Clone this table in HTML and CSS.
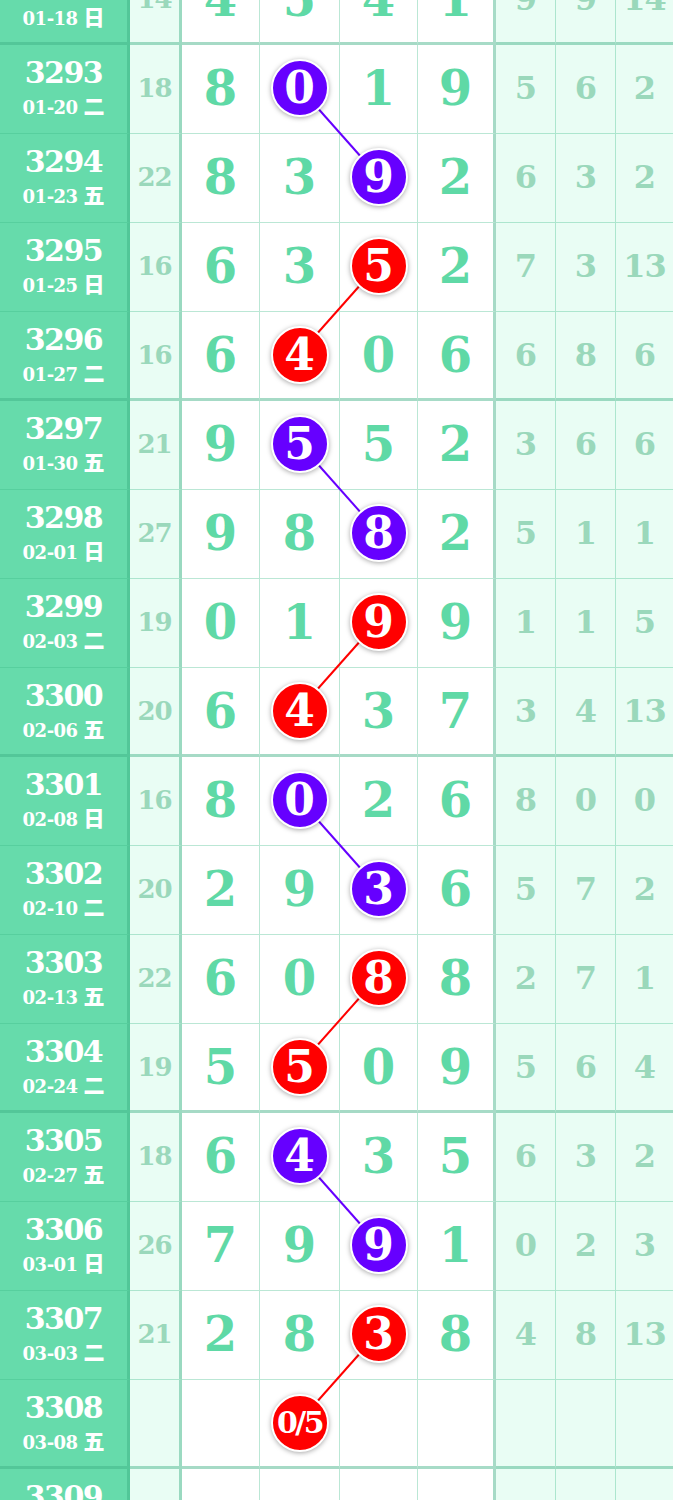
FILE: index.html
```html
<!DOCTYPE html>
<html lang="zh">
<head>
    <meta charset="UTF-8">
    <meta name="viewport" content="width=device-width, initial-scale=1.0">
    <title>走势图</title>
    <link rel="stylesheet" href="styles.css">
</head>
<body>

    <div class="chart">
        <!-- lines between the balls, under them -->
        <svg class="links" width="673" height="1602" viewBox="0 0 673 1602">
            <line x1="299" y1="131" x2="378" y2="220" class="purple"/>
            <line x1="378" y1="309" x2="299" y2="398" class="red"/>
            <line x1="299" y1="487" x2="378" y2="576" class="purple"/>
            <line x1="378" y1="665" x2="299" y2="754" class="red"/>
            <line x1="299" y1="843" x2="378" y2="932" class="purple"/>
            <line x1="378" y1="1021" x2="299" y2="1110" class="red"/>
            <line x1="299" y1="1199" x2="378" y2="1288" class="purple"/>
            <line x1="378" y1="1377" x2="299" y2="1466" class="red"/>
        </svg>

        <div class="row end">
            <div class="cell issue"><b>3292</b><span>01-18 <em>日</em></span></div>
            <div class="cell sum">14</div>
            <div class="cell num">4</div>
            <div class="cell num">5</div>
            <div class="cell num">4</div>
            <div class="cell num">1</div>
            <div class="cell stat">9</div>
            <div class="cell stat">9</div>
            <div class="cell stat">14</div>
        </div>

        <div class="row">
            <div class="cell issue"><b>3293</b><span>01-20 <em>二</em></span></div>
            <div class="cell sum">18</div>
            <div class="cell num">8</div>
            <div class="cell num"><i class="ball purple">0</i></div>
            <div class="cell num">1</div>
            <div class="cell num">9</div>
            <div class="cell stat">5</div>
            <div class="cell stat">6</div>
            <div class="cell stat">2</div>
        </div>
        <div class="row">
            <div class="cell issue"><b>3294</b><span>01-23 <em>五</em></span></div>
            <div class="cell sum">22</div>
            <div class="cell num">8</div>
            <div class="cell num">3</div>
            <div class="cell num"><i class="ball purple">9</i></div>
            <div class="cell num">2</div>
            <div class="cell stat">6</div>
            <div class="cell stat">3</div>
            <div class="cell stat">2</div>
        </div>
        <div class="row">
            <div class="cell issue"><b>3295</b><span>01-25 <em>日</em></span></div>
            <div class="cell sum">16</div>
            <div class="cell num">6</div>
            <div class="cell num">3</div>
            <div class="cell num"><i class="ball red">5</i></div>
            <div class="cell num">2</div>
            <div class="cell stat">7</div>
            <div class="cell stat">3</div>
            <div class="cell stat">13</div>
        </div>
        <div class="row end">
            <div class="cell issue"><b>3296</b><span>01-27 <em>二</em></span></div>
            <div class="cell sum">16</div>
            <div class="cell num">6</div>
            <div class="cell num"><i class="ball red">4</i></div>
            <div class="cell num">0</div>
            <div class="cell num">6</div>
            <div class="cell stat">6</div>
            <div class="cell stat">8</div>
            <div class="cell stat">6</div>
        </div>

        <div class="row">
            <div class="cell issue"><b>3297</b><span>01-30 <em>五</em></span></div>
            <div class="cell sum">21</div>
            <div class="cell num">9</div>
            <div class="cell num"><i class="ball purple">5</i></div>
            <div class="cell num">5</div>
            <div class="cell num">2</div>
            <div class="cell stat">3</div>
            <div class="cell stat">6</div>
            <div class="cell stat">6</div>
        </div>
        <div class="row">
            <div class="cell issue"><b>3298</b><span>02-01 <em>日</em></span></div>
            <div class="cell sum">27</div>
            <div class="cell num">9</div>
            <div class="cell num">8</div>
            <div class="cell num"><i class="ball purple">8</i></div>
            <div class="cell num">2</div>
            <div class="cell stat">5</div>
            <div class="cell stat">1</div>
            <div class="cell stat">1</div>
        </div>
        <div class="row">
            <div class="cell issue"><b>3299</b><span>02-03 <em>二</em></span></div>
            <div class="cell sum">19</div>
            <div class="cell num">0</div>
            <div class="cell num">1</div>
            <div class="cell num"><i class="ball red">9</i></div>
            <div class="cell num">9</div>
            <div class="cell stat">1</div>
            <div class="cell stat">1</div>
            <div class="cell stat">5</div>
        </div>
        <div class="row end">
            <div class="cell issue"><b>3300</b><span>02-06 <em>五</em></span></div>
            <div class="cell sum">20</div>
            <div class="cell num">6</div>
            <div class="cell num"><i class="ball red">4</i></div>
            <div class="cell num">3</div>
            <div class="cell num">7</div>
            <div class="cell stat">3</div>
            <div class="cell stat">4</div>
            <div class="cell stat">13</div>
        </div>

        <div class="row">
            <div class="cell issue"><b>3301</b><span>02-08 <em>日</em></span></div>
            <div class="cell sum">16</div>
            <div class="cell num">8</div>
            <div class="cell num"><i class="ball purple">0</i></div>
            <div class="cell num">2</div>
            <div class="cell num">6</div>
            <div class="cell stat">8</div>
            <div class="cell stat">0</div>
            <div class="cell stat">0</div>
        </div>
        <div class="row">
            <div class="cell issue"><b>3302</b><span>02-10 <em>二</em></span></div>
            <div class="cell sum">20</div>
            <div class="cell num">2</div>
            <div class="cell num">9</div>
            <div class="cell num"><i class="ball purple">3</i></div>
            <div class="cell num">6</div>
            <div class="cell stat">5</div>
            <div class="cell stat">7</div>
            <div class="cell stat">2</div>
        </div>
        <div class="row">
            <div class="cell issue"><b>3303</b><span>02-13 <em>五</em></span></div>
            <div class="cell sum">22</div>
            <div class="cell num">6</div>
            <div class="cell num">0</div>
            <div class="cell num"><i class="ball red">8</i></div>
            <div class="cell num">8</div>
            <div class="cell stat">2</div>
            <div class="cell stat">7</div>
            <div class="cell stat">1</div>
        </div>
        <div class="row end">
            <div class="cell issue"><b>3304</b><span>02-24 <em>二</em></span></div>
            <div class="cell sum">19</div>
            <div class="cell num">5</div>
            <div class="cell num"><i class="ball red">5</i></div>
            <div class="cell num">0</div>
            <div class="cell num">9</div>
            <div class="cell stat">5</div>
            <div class="cell stat">6</div>
            <div class="cell stat">4</div>
        </div>

        <div class="row">
            <div class="cell issue"><b>3305</b><span>02-27 <em>五</em></span></div>
            <div class="cell sum">18</div>
            <div class="cell num">6</div>
            <div class="cell num"><i class="ball purple">4</i></div>
            <div class="cell num">3</div>
            <div class="cell num">5</div>
            <div class="cell stat">6</div>
            <div class="cell stat">3</div>
            <div class="cell stat">2</div>
        </div>
        <div class="row">
            <div class="cell issue"><b>3306</b><span>03-01 <em>日</em></span></div>
            <div class="cell sum">26</div>
            <div class="cell num">7</div>
            <div class="cell num">9</div>
            <div class="cell num"><i class="ball purple">9</i></div>
            <div class="cell num">1</div>
            <div class="cell stat">0</div>
            <div class="cell stat">2</div>
            <div class="cell stat">3</div>
        </div>
        <div class="row">
            <div class="cell issue"><b>3307</b><span>03-03 <em>二</em></span></div>
            <div class="cell sum">21</div>
            <div class="cell num">2</div>
            <div class="cell num">8</div>
            <div class="cell num"><i class="ball red">3</i></div>
            <div class="cell num">8</div>
            <div class="cell stat">4</div>
            <div class="cell stat">8</div>
            <div class="cell stat">13</div>
        </div>
        <div class="row end">
            <div class="cell issue"><b>3308</b><span>03-08 <em>五</em></span></div>
            <div class="cell sum"></div>
            <div class="cell num"></div>
            <div class="cell num"><i class="ball red small">0/5</i></div>
            <div class="cell num"></div>
            <div class="cell num"></div>
            <div class="cell stat"></div>
            <div class="cell stat"></div>
            <div class="cell stat"></div>
        </div>

        <div class="row">
            <div class="cell issue"><b>3309</b><span>03-10 <em>日</em></span></div>
            <div class="cell sum"></div>
            <div class="cell num"></div>
            <div class="cell num"></div>
            <div class="cell num"></div>
            <div class="cell num"></div>
            <div class="cell stat"></div>
            <div class="cell stat"></div>
            <div class="cell stat"></div>
        </div>
    </div>

</body>
</html>
```

FILE: styles.css
```css
/* Reset */
* {
    margin: 0;
    padding: 0;
    box-sizing: border-box;
}

body {
    background: #fff;
    width: 673px;
    height: 1500px;
    overflow: hidden;
    font-family: "DejaVu Serif", "Noto Sans CJK SC", serif;
    font-weight: bold;
}

.chart {
    position: relative;
    width: 673px;
    margin-top: -44px;
}

.links {
    position: absolute;
    top: 0;
    left: 0;
    z-index: 1;
}

.links line {
    stroke-width: 2;
}

.links .purple {
    stroke: #6600ff;
}

.links .red {
    stroke: #f00;
}

.row {
    display: grid;
    grid-template-columns: 130px 52px 78px 80px 78px 78px 60px 60px 57px;
    height: 89px;
}

.cell {
    display: flex;
    flex-direction: column;
    align-items: center;
    justify-content: center;
    padding-bottom: 3px;
    line-height: 1;
    border-bottom: 1px solid rgba(60, 185, 135, 0.35);
    border-right: 1px solid rgba(60, 185, 135, 0.35);
}

.row.end .cell {
    border-bottom: 3px solid rgba(60, 175, 130, 0.45);
    padding-bottom: 1px;
}

/* issue + date column */
.issue {
    background: #66dbab;
    color: #fff;
    border-right: 3px solid rgba(60, 175, 130, 0.45);
}

.issue b {
    font-size: 30px;
    letter-spacing: -1.5px;
}

.issue span {
    font-size: 18px;
    letter-spacing: -0.5px;
    margin-top: 8px;
}

.issue em {
    font-style: normal;
    font-size: 21px;
    font-weight: 900;
    letter-spacing: 0;
}

.sum {
    background: #e9fdf4;
    color: #9ad8bb;
    font-size: 26px;
    letter-spacing: -1px;
    border-right: 3px solid rgba(60, 175, 130, 0.45);
}

.num {
    color: #5fd9a6;
    font-size: 48px;
}

.num:nth-child(6) {
    border-right: 3px solid rgba(60, 175, 130, 0.45);
}

.stat {
    background: #e9fdf4;
    color: #9ad8bb;
    font-size: 32px;
    letter-spacing: -1px;
}

.stat:last-child {
    border-right: none;
}

.ball {
    position: relative;
    z-index: 2;
    display: flex;
    align-items: center;
    justify-content: center;
    width: 58px;
    height: 58px;
    border-radius: 50%;
    border: 2px solid #fff;
    box-shadow: 0 1px 5px rgba(0, 0, 0, 0.35);
    color: #fff;
    font-style: normal;
    font-size: 44px;
}

.ball.purple {
    background: #6600ff;
}

.ball.red {
    background: #f00;
}

.ball.small {
    font-size: 30px;
    letter-spacing: -2.5px;
}
```
